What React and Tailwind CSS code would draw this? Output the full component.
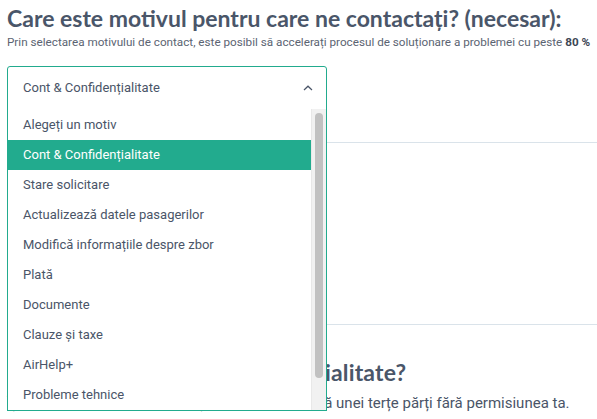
import React, { useState } from 'react'

const reasons = [
  'Alegeți un motiv',
  'Cont & Confidențialitate',
  'Stare solicitare',
  'Actualizează datele pasagerilor',
  'Modifică informațiile despre zbor',
  'Plată',
  'Documente',
  'Clauze și taxe',
  'AirHelp+',
  'Probleme tehnice',
]

function ChevronUp() {
  return (
    <svg width="10" height="6" viewBox="0 0 10 6" fill="none">
      <path d="M1 5L5 1.2L9 5" stroke="#4a5568" strokeWidth="1.2" />
    </svg>
  )
}

export default function App() {
  const [selected, setSelected] = useState(1)

  return (
    <div className="relative w-[597px] h-[419px] overflow-hidden bg-white font-['Roboto',sans-serif]">
      <div className="pl-[7px] pt-[3px]">
        <h1 className="font-['Lato',sans-serif] font-bold text-[23px] leading-[30px] text-[#4a5669]">
          Care este motivul pentru care ne contactați? (necesar):
        </h1>
        <p className="mt-[1px] text-[11.7px] leading-[16px] text-[#5b6472] whitespace-nowrap">
          Prin selectarea motivului de contact, este posibil să accelerați procesul de soluționare a problemei cu peste <b className="text-[#3d4654]">80 %</b>
        </p>

        <div className="mt-[16px] w-[320px] h-[44px] border border-[#22ab8e] rounded-t-[3px] flex items-center justify-between pl-[15px] pr-[13px] text-[13px] text-[#4a5568]">
          <span>{reasons[selected]}</span>
          <ChevronUp />
        </div>

        <div className="ml-[319px] mt-[32px] h-px bg-[#dae3ea]" />
        <div className="ml-[319px] mt-[181px] h-px bg-[#dae3ea]" />

        <h2 className="mt-[32px] font-['Lato',sans-serif] font-bold text-[23px] leading-[30px] tracking-[0.15px] text-[#4a5669]">
          Ce înseamnă Cont și Confidențialitate?
        </h2>
        <p className="mt-[5px] text-[15px] leading-[22px] text-[#4a5568] whitespace-nowrap">
          Îți garantăm că nicio informație nu este divulgată unei terțe părți fără permisiunea ta.
        </p>
      </div>

      {/* open dropdown list */}
      <div className="absolute left-[7px] top-[109px] w-[320px] h-[302px] bg-white border border-t-0 border-[#22ab8e] flex">
        <ul className="flex-1 pt-px">
          {reasons.map((r, i) => (
            <li
              key={r}
              onClick={() => setSelected(i)}
              className={
                'h-[30px] flex items-center pl-[15px] text-[13px] cursor-pointer ' +
                (i === selected ? 'bg-[#22ab8e] text-white' : 'text-[#4a5568]')
              }
            >
              {r}
            </li>
          ))}
        </ul>
        <div className="w-[15px] bg-[#f1f1f1] border-l border-[#e8e8e8] pt-[4px] flex justify-center">
          <div className="w-[8px] h-[265px] rounded-full bg-[#c1c1c1]" />
        </div>
      </div>
    </div>
  )
}
